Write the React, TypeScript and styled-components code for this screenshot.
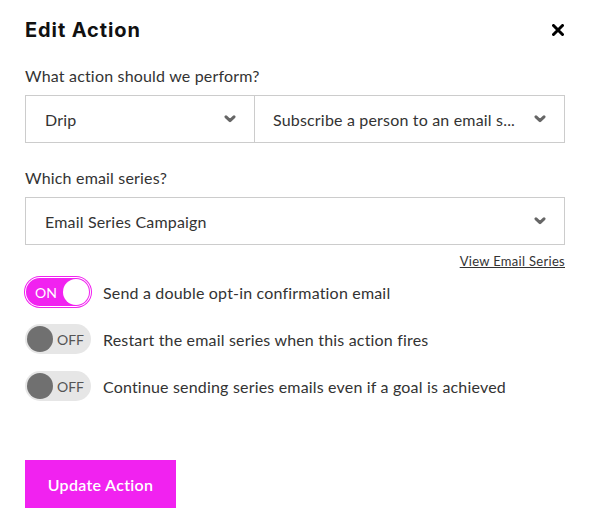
import styled, { createGlobalStyle } from "styled-components";

const GlobalStyle = createGlobalStyle`
  body {
    margin: 0;
    background: #fff;
    font-family: "Lato", "Liberation Sans", sans-serif;
    letter-spacing: 0.18px;
    color: #333;
  }
`;

const MAGENTA = "#f122f0";

const Chevron = () => (
  <svg width="12" height="8" viewBox="0 0 12 8">
    <path
      d="M2 1.8 L6 5.6 L10 1.8"
      fill="none"
      stroke="#666"
      strokeWidth="3"
      strokeLinecap="round"
      strokeLinejoin="round"
    />
  </svg>
);

const CloseIcon = () => (
  <svg width="12" height="12" viewBox="0 0 12 12">
    <path
      d="M1.5 1.5 L10.5 10.5 M10.5 1.5 L1.5 10.5"
      stroke="#000"
      strokeWidth="3"
      strokeLinecap="round"
    />
  </svg>
);

const Toggle = ({ on }: { on: boolean }) => (
  <Switch $on={on}>
    {on ? (
      <>
        <SwitchText $on>ON</SwitchText>
        <Knob $on />
      </>
    ) : (
      <>
        <Knob $on={false} />
        <SwitchText $on={false}>OFF</SwitchText>
      </>
    )}
  </Switch>
);

export default function App() {
  return (
    <>
      <GlobalStyle />
      <Modal>
        <Header>
          <Title>Edit Action</Title>
          <CloseButton>
            <CloseIcon />
          </CloseButton>
        </Header>

        <Label>What action should we perform?</Label>
        <SelectRow>
          <Select $width="230px">
            <SelectText>Drip</SelectText>
            <Chevron />
          </Select>
          <Select $width="auto" $joined>
            <SelectText>Subscribe a person to an email s...</SelectText>
            <Chevron />
          </Select>
        </SelectRow>

        <Label $top="25px">Which email series?</Label>
        <SelectRow>
          <Select $width="100%">
            <SelectText>Email Series Campaign</SelectText>
            <Chevron />
          </Select>
        </SelectRow>
        <LinkRow>
          <ViewLink href="#">View Email Series</ViewLink>
        </LinkRow>

        <Options>
          <Option>
            <Toggle on />
            <OptionText>Send a double opt-in confirmation email</OptionText>
          </Option>
          <Option>
            <Toggle on={false} />
            <OptionText>Restart the email series when this action fires</OptionText>
          </Option>
          <Option>
            <Toggle on={false} />
            <OptionText>Continue sending series emails even if a goal is achieved</OptionText>
          </Option>
        </Options>

        <SubmitButton>Update Action</SubmitButton>
      </Modal>
    </>
  );
}

const Modal = styled.div`
  width: 540px;
  padding: 18px 27px 17px 25px;
  display: flex;
  flex-direction: column;
`;

const Header = styled.div`
  display: flex;
  align-items: center;
  justify-content: space-between;
  height: 24px;
  margin-bottom: 24px;
`;

const Title = styled.h1`
  margin: 0;
  font-family: "Inter", "Lato", sans-serif;
  font-size: 20px;
  line-height: 24px;
  font-weight: 700;
  color: #111;
  letter-spacing: 0.9px;
`;

const CloseButton = styled.button`
  border: none;
  background: none;
  padding: 0;
  margin-right: 1px;
  display: flex;
  cursor: pointer;
`;

const Label = styled.div<{ $top?: string }>`
  margin-top: ${(p) => p.$top || "0"};
  font-size: 16px;
  line-height: 20px;
  color: #333;
  margin-bottom: 9px;
`;

const SelectRow = styled.div`
  display: flex;
  width: 540px;
`;

const Select = styled.div<{ $width: string; $joined?: boolean }>`
  box-sizing: border-box;
  width: ${(p) => p.$width};
  flex: ${(p) => (p.$width === "auto" ? "1" : "none")};
  height: 48px;
  border: 1px solid #ccc;
  ${(p) => (p.$joined ? "border-left: none;" : "")}
  display: flex;
  align-items: center;
  justify-content: space-between;
  padding: 0 18px 0 ${(p) => (p.$joined ? "18px" : "19px")};
  background: #fff;
`;

const SelectText = styled.span`
  font-size: 16px;
  color: #333;
  white-space: nowrap;
`;

const LinkRow = styled.div`
  display: flex;
  justify-content: flex-end;
  margin-top: 7px;
  height: 18px;
`;

const ViewLink = styled.a`
  font-size: 13px;
  line-height: 18px;
  color: #333;
  letter-spacing: 0.3px;
  text-decoration: underline;
`;

const Options = styled.div`
  display: flex;
  flex-direction: column;
  gap: 17px;
  margin-top: 7px;
`;

const Option = styled.div`
  display: flex;
  align-items: center;
  gap: 12px;
`;

const Switch = styled.div<{ $on: boolean }>`
  box-sizing: border-box;
  width: 66px;
  height: 30px;
  border-radius: 15px;
  display: flex;
  align-items: center;
  justify-content: ${(p) => (p.$on ? "space-between" : "flex-start")};
  gap: 4px;
  padding: 0 2px 0 ${(p) => (p.$on ? "10px" : "2px")};
  background: ${(p) => (p.$on ? MAGENTA : "#e6e6e6")};
  box-shadow: ${(p) =>
    p.$on ? `0 0 0 1px #fff inset, 0 0 0 1px ${MAGENTA}` : "none"};
`;

const SwitchText = styled.span<{ $on: boolean }>`
  font-size: 14px;
  letter-spacing: 0;
  color: ${(p) => (p.$on ? "#fff" : "#555")};
`;

const Knob = styled.span<{ $on: boolean }>`
  flex: none;
  width: 26px;
  height: 26px;
  border-radius: 50%;
  background: ${(p) => (p.$on ? "#fff" : "#707070")};
`;

const OptionText = styled.span`
  font-size: 16px;
  color: #333;
`;

const SubmitButton = styled.button`
  align-self: flex-start;
  margin-top: 59px;
  width: 151px;
  height: 48px;
  border: none;
  background: ${MAGENTA};
  color: #fff;
  font-family: inherit;
  font-size: 16px;
  font-weight: 600;
  letter-spacing: 0.3px;
  cursor: pointer;
`;
